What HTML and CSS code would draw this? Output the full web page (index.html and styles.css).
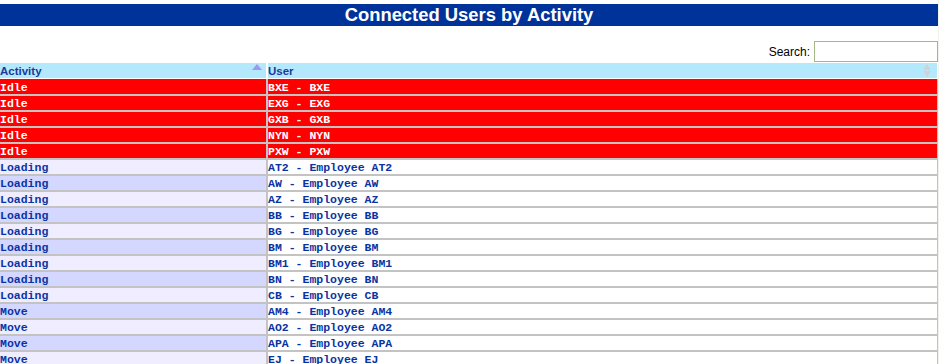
FILE: index.html
```html
<!DOCTYPE html>
<html>
<head>
<meta charset="utf-8">
<link rel="stylesheet" href="styles.css">
</head>
<body>
<div class="page">
  <h1 class="title">Connected Users by Activity</h1>
  <div class="filter">
    <label class="filter-label">Search:</label>
    <input class="filter-input" type="text">
  </div>
  <table class="grid">
    <thead>
      <tr>
        <th class="col-activity sorted">Activity<span class="sort-up"></span></th>
        <th class="col-user">User<span class="sort-both"><span class="tri-up"></span><span class="tri-down"></span></span></th>
      </tr>
    </thead>
    <tbody>
      <tr class="idle"><td>Idle</td><td>BXE - BXE</td></tr>
      <tr class="idle"><td>Idle</td><td>EXG - EXG</td></tr>
      <tr class="idle"><td>Idle</td><td>GXB - GXB</td></tr>
      <tr class="idle"><td>Idle</td><td>NYN - NYN</td></tr>
      <tr class="idle"><td>Idle</td><td>PXW - PXW</td></tr>
      <tr class="light"><td>Loading</td><td>AT2 - Employee AT2</td></tr>
      <tr class="dark"><td>Loading</td><td>AW - Employee AW</td></tr>
      <tr class="light"><td>Loading</td><td>AZ - Employee AZ</td></tr>
      <tr class="dark"><td>Loading</td><td>BB - Employee BB</td></tr>
      <tr class="light"><td>Loading</td><td>BG - Employee BG</td></tr>
      <tr class="dark"><td>Loading</td><td>BM - Employee BM</td></tr>
      <tr class="light"><td>Loading</td><td>BM1 - Employee BM1</td></tr>
      <tr class="dark"><td>Loading</td><td>BN - Employee BN</td></tr>
      <tr class="light"><td>Loading</td><td>CB - Employee CB</td></tr>
      <tr class="dark"><td>Move</td><td>AM4 - Employee AM4</td></tr>
      <tr class="light"><td>Move</td><td>AO2 - Employee AO2</td></tr>
      <tr class="dark"><td>Move</td><td>APA - Employee APA</td></tr>
      <tr class="light"><td>Move</td><td>EJ - Employee EJ</td></tr>
    </tbody>
  </table>
</div>
</body>
</html>
```

FILE: styles.css
```css
html {
  background: #f2f2ec;
  margin: 0;
  padding: 0;
}
body {
  margin: 0;
  padding: 0;
  width: 938px;
  height: 364px;
  overflow: hidden;
  background: #ffffff;
}
.page {
  padding-top: 4px;
}
.title {
  margin: 0;
  height: 22px;
  line-height: 22px;
  background: #003399;
  color: #ffffff;
  font-family: "Liberation Sans", Arial, sans-serif;
  font-weight: bold;
  font-size: 18.4px;
  text-align: center;
}
.filter {
  display: flex;
  justify-content: flex-end;
  align-items: center;
  gap: 4px;
  margin-top: 15px;
  height: 21px;
}
.filter-label {
  font-family: "Liberation Sans", Arial, sans-serif;
  font-size: 12px;
  color: #000000;
}
.filter-input {
  box-sizing: border-box;
  width: 124px;
  height: 21px;
  margin: 0;
  border: 1px solid #a6b787;
  background: #ffffff;
  padding: 0 2px;
}
.grid {
  width: 938px;
  border-collapse: separate;
  border-spacing: 0;
  margin-top: 1px;
  table-layout: fixed;
}
.grid th {
  position: relative;
  box-sizing: border-box;
  height: 16px;
  padding: 1px 0 0 0;
  background: #b4e9fd;
  color: #1a3a9a;
  font-family: "Liberation Sans", Arial, sans-serif;
  font-weight: bold;
  font-size: 11.5px;
  line-height: 14px;
  text-align: left;
  border-bottom: 1px solid #ffffff;
}
.grid th.col-activity {
  width: 268px;
  border-right: 2px solid #ffffff;
}
.grid th.col-user {
  border-right: 1px solid #ffffff;
}
.sort-up {
  position: absolute;
  right: 4px;
  top: 1px;
  width: 0;
  height: 0;
  border-left: 5px solid transparent;
  border-right: 5px solid transparent;
  border-bottom: 6px solid #9a9af0;
}
.sort-both {
  position: absolute;
  right: 6px;
  top: 1px;
  display: flex;
  flex-direction: column;
  gap: 1px;
}
.tri-up {
  width: 0;
  height: 0;
  border-left: 4px solid transparent;
  border-right: 4px solid transparent;
  border-bottom: 6px solid #d2d2d2;
}
.tri-down {
  width: 0;
  height: 0;
  border-left: 4px solid transparent;
  border-right: 4px solid transparent;
  border-top: 6px solid #d2d2d2;
}
.grid td {
  box-sizing: border-box;
  height: 16px;
  padding: 1px 0 0 0;
  font-family: "Liberation Mono", "Courier New", monospace;
  font-weight: bold;
  font-size: 11.5px;
  line-height: 13px;
  color: #0a33a2;
  white-space: nowrap;
  border-bottom: 2px solid #c3c3c3;
  vertical-align: top;
  overflow: hidden;
}
.grid tbody tr:first-child td {
  height: 17px;
  padding-top: 2px;
}
.grid td:first-child {
  border-right: 2px solid #c3c3c3;
}
.grid td:last-child {
  border-right: 1px solid #c3c3c3;
  background: #ffffff;
}
.grid tr.idle td {
  background: #ff0000;
  color: #ffffff;
}
.grid tr.light td:first-child {
  background: #efedff;
}
.grid tr.dark td:first-child {
  background: #d4d7ff;
}
```
